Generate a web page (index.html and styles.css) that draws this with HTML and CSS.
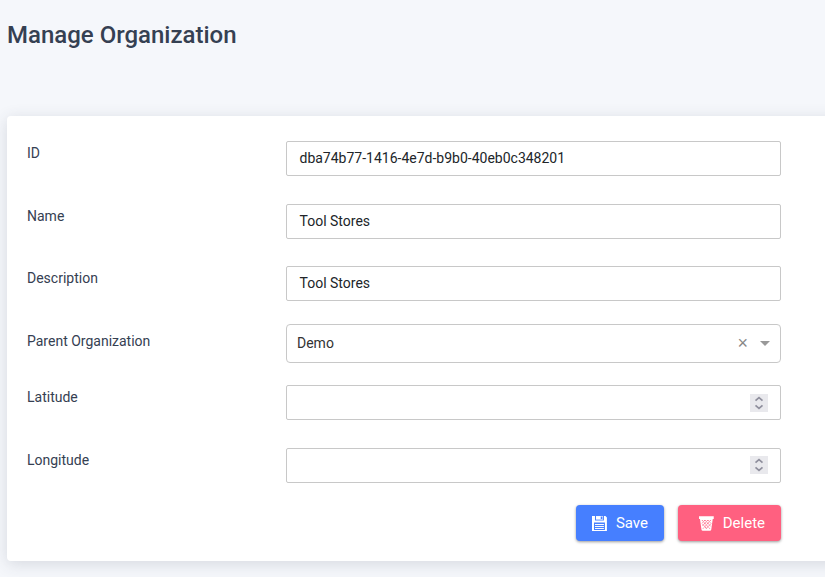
FILE: index.html
```html
<!DOCTYPE html>
<html lang="en">
<head>
<meta charset="utf-8">
<title>Manage Organization</title>
<link rel="stylesheet" href="styles.css">
</head>
<body>
<h1 class="title">Manage Organization</h1>
<main class="card">
  <form class="form">
    <div class="row">
      <label class="label">ID</label>
      <div class="field">dba74b77-1416-4e7d-b9b0-40eb0c348201</div>
    </div>
    <div class="row row-short">
      <label class="label">Name</label>
      <div class="field">Tool Stores</div>
    </div>
    <div class="row row-description">
      <label class="label">Description</label>
      <div class="field">Tool Stores</div>
    </div>
    <div class="row row-select">
      <label class="label">Parent Organization</label>
      <div class="field select">
        <span class="value">Demo</span>
        <span class="clear">×</span>
        <span class="arrow"></span>
      </div>
    </div>
    <div class="row">
      <label class="label">Latitude</label>
      <div class="field number">
        <svg class="spinner" viewBox="0 0 18 18"><path d="M5.5 6.7 9 3.7 12.5 6.7M5.5 11.3 9 14.3 12.5 11.3"/></svg>
      </div>
    </div>
    <div class="row row-last">
      <label class="label">Longitude</label>
      <div class="field number">
        <svg class="spinner" viewBox="0 0 18 18"><path d="M5.5 6.7 9 3.7 12.5 6.7M5.5 11.3 9 14.3 12.5 11.3"/></svg>
      </div>
    </div>
    <div class="actions">
      <button type="button" class="button save">
        <svg class="icon" viewBox="0 0 15 15"><path fill="#fff" fill-rule="evenodd" d="M0 0H3V4.5H12V0H13.5L15 1.5V15H0ZM2 6.5V14H13V6.5Z"/><path fill="#fff" d="M4 0H11V3.6H4Z"/><path fill="#467fff" d="M8.8.5H10.5V3H8.8Z"/><path stroke="#fff" d="M3 8.5H12M3 10.5H12M3 12.5H12"/></svg>
        <span>Save</span>
      </button>
      <button type="button" class="button delete">
        <svg class="icon" viewBox="0 0 15 15"><path fill="#fff" d="M0 0H15V3H14L12.5 13.5Q12.3 15 11 15H4Q2.7 15 2.5 13.5L1 3H0Z"/><path fill="none" stroke="#ff6080" stroke-width=".9" stroke-dasharray="1.5 .6" d="M3 4 11 12.8M6 4 12 10.5M9 4 12.3 7.5M3.4 7.8 8 13M12 4 4 12.8M9 4 3.3 10.2M6 4 3 7.3M12 7.8 7 13"/></svg>
        <span>Delete</span>
      </button>
    </div>
  </form>
</main>
</body>
</html>
```
FILE: styles.css
```css
* { box-sizing: border-box; }

body {
  margin: 0;
  height: 577px;
  padding: 20px 0 0 7px;
  overflow: hidden;
  background: #f5f7fb;
  color: #354052;
  font-family: Roboto, sans-serif;
  font-size: 14px;
}

.title {
  height: 96px;
  margin: 0;
  font-size: 24px;
  font-weight: 500;
  line-height: 30px;
}

.card {
  width: 838px;
  height: 445px;
  padding: 25px 20px 0;
  background: #fff;
  border-radius: 4px;
  box-shadow: 0 3px 16px rgba(53, 64, 82, 0.16);
}

.form { width: 754px; }

.row {
  display: flex;
  align-items: flex-start;
  height: 63px;
}

.row-short { height: 62px; }
.row-description { height: 58px; }
.row-select { height: 61px; }
.row-last { height: 57px; }

.label {
  width: 259px;
  padding-top: 2px;
  line-height: 20px;
}

.row-select .label { padding-top: 7px; }

.field {
  display: flex;
  align-items: center;
  width: 495px;
  height: 35px;
  padding: 0 12px 2px 12.5px;
  border: 1px solid #c8c8c8;
  border-radius: 2px;
  color: #212529;
  line-height: 20px;
}

.select {
  height: 39px;
  padding: 0 10px 1px;
  border-radius: 4px;
  color: #333;
}

.value { flex: 1; }

.clear {
  margin: -1px 12px 0 0;
  color: #888;
  font-family: "Liberation Sans", sans-serif;
  font-size: 18px;
}

.arrow {
  margin-top: 1px;
  border: 5px solid transparent;
  border-top-color: #999;
  border-bottom: 0;
}

.number {
  justify-content: flex-end;
  padding-bottom: 0;
}

.row-last .number { padding-bottom: 2px; }

.spinner {
  width: 18px;
  height: 18px;
  background: #e9e9ed;
  fill: none;
  stroke: #8f8f9d;
  stroke-width: 1.7;
}

.actions {
  display: flex;
  justify-content: flex-end;
  gap: 14px;
}

.button {
  display: flex;
  align-items: center;
  height: 36px;
  padding: 0 16px;
  border: 0;
  border-radius: 4px;
  color: #fff;
  font: 400 15px/20px Roboto, sans-serif;
  box-shadow: 0 1px 3px rgba(0, 0, 0, 0.4);
}

.icon {
  width: 15px;
  height: 15px;
  margin-right: 9px;
}

.save { width: 88px; background: #467fff; }
.delete { width: 103px; padding-left: 21px; background: #ff6080; }
```
